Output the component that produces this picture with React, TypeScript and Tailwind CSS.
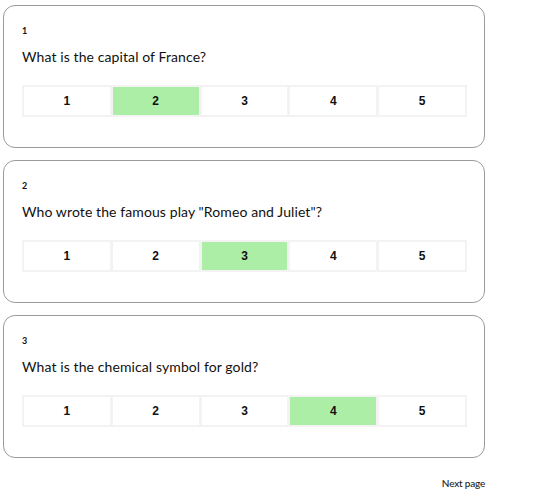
import React from "react";

const questions = [
  { n: 1, q: "What is the capital of France?", sel: 2 },
  { n: 2, q: 'Who wrote the famous play "Romeo and Juliet"?', sel: 3 },
  { n: 3, q: "What is the chemical symbol for gold?", sel: 4 },
];

export default function App() {
  return (
    <div
      className="w-[551px] h-[499px] bg-white pt-[5px] pl-[3px] text-[#111]"
      style={{ fontFamily: "Lato, 'Noto Sans', sans-serif" }}
    >
      <div className="w-[482px] flex flex-col gap-[12px]">
        {questions.map((item) => (
          <div
            key={item.n}
            className="h-[143px] border border-[#9a9a9a] rounded-[12px] pt-[19px] px-[18px]"
          >
            <div className="text-[9px] leading-[12px] font-bold">{item.n}</div>
            <div className="mt-[10px] text-[14px] leading-[20px] tracking-[0.1px]">{item.q}</div>
            <div className="mt-[18px] w-[445px] h-[32px] grid grid-cols-5 gap-px bg-[#f3f3f3] p-px">
              {[1, 2, 3, 4, 5].map((v) => (
                <div
                  key={v}
                  className={`flex items-center justify-center border border-[#f3f3f3] text-[12px] font-semibold ${
                    v === item.sel ? "bg-[#adeea6]" : "bg-white"
                  }`}
                  style={{ fontFamily: "'Liberation Sans', Arial, sans-serif" }}
                >
                  {v}
                </div>
              ))}
            </div>
          </div>
        ))}
      </div>
      <div className="w-[482px] flex justify-end mt-[19px]">
        <span className="text-[10px] leading-[12px] font-medium text-[#222] tracking-[-0.2px]">Next page</span>
      </div>
    </div>
  );
}
